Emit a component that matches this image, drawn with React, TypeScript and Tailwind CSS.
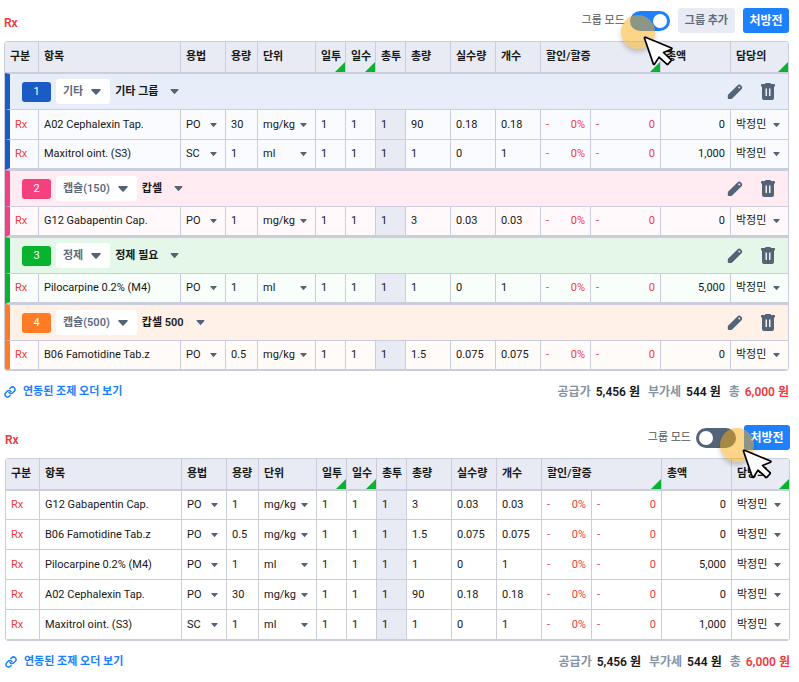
import { useId, useState } from 'react';
import type { ReactNode } from 'react';
import { Link } from 'lucide-react';

type Item = {
  name: string;
  usage: string;
  dose: string;
  unit: string;
  amount: string;
  real: string;
  count: string;
  total: string;
};

type Group = {
  no: number;
  kind: string;
  label: string;
  bar: string;
  badge: string;
  head: string;
  row: string;
  items: Item[];
};

const cephalexin: Item = { name: 'A02 Cephalexin Tap.', usage: 'PO', dose: '30', unit: 'mg/kg', amount: '90', real: '0.18', count: '0.18', total: '0' };
const maxitrol: Item = { name: 'Maxitrol oint. (S3)', usage: 'SC', dose: '1', unit: 'ml', amount: '1', real: '0', count: '1', total: '1,000' };
const gabapentin: Item = { name: 'G12 Gabapentin Cap.', usage: 'PO', dose: '1', unit: 'mg/kg', amount: '3', real: '0.03', count: '0.03', total: '0' };
const pilocarpine: Item = { name: 'Pilocarpine 0.2% (M4)', usage: 'PO', dose: '1', unit: 'ml', amount: '1', real: '0', count: '1', total: '5,000' };
const famotidine: Item = { name: 'B06 Famotidine Tab.z', usage: 'PO', dose: '0.5', unit: 'mg/kg', amount: '1.5', real: '0.075', count: '0.075', total: '0' };

const groups: Group[] = [
  { no: 1, kind: '기타', label: '기타 그룹', bar: 'border-l-[#1a5bc6]', badge: 'bg-[#1a5bc6]', head: 'bg-[#e7edf9]', row: 'bg-[#f9fbff]', items: [cephalexin, maxitrol] },
  { no: 2, kind: '캡슐(150)', label: '캅셀', bar: 'border-l-[#f54080]', badge: 'bg-[#f54080]', head: 'bg-[#ffebf1]', row: 'bg-[#fff9fb]', items: [gabapentin] },
  { no: 3, kind: '정제', label: '정제 필요', bar: 'border-l-[#08b32f]', badge: 'bg-[#08b32f]', head: 'bg-[#e4f7e9]', row: 'bg-[#f8fefa]', items: [pilocarpine] },
  { no: 4, kind: '캡슐(500)', label: '캅셀 500', bar: 'border-l-[#ff7c24]', badge: 'bg-[#ff7c24]', head: 'bg-[#fff1e7]', row: 'bg-[#fffbf8]', items: [famotidine] },
];

const flatItems = [gabapentin, famotidine, pilocarpine, cephalexin, maxitrol];

function Caret({ className = '' }: { className?: string }) {
  return (
    <svg viewBox="0 0 10 6" className={`pointer-events-none fill-[#546478] ${className}`} aria-hidden="true">
      <path d="M1 0h8a.8.8 0 0 1 .6 1.2L5.6 5.6a.8.8 0 0 1-1.2 0L.4 1.2A.8.8 0 0 1 1 0Z" />
    </svg>
  );
}

function CellSelect({ label, value, options }: { label: string; value: string; options: string[] }) {
  return (
    <div className="flex items-center pr-2">
      <select aria-label={label} defaultValue={value} className="-mr-2 min-w-0 flex-1 appearance-none bg-transparent pl-[5px]">
        {options.map((o) => (
          <option key={o}>{o}</option>
        ))}
      </select>
      <Caret className="h-1 w-[7px] shrink-0" />
    </div>
  );
}

function Corner() {
  return (
    <svg viewBox="0 0 10 10" className="absolute right-0 bottom-0 size-[10px] fill-[#08b32f]" aria-hidden="true">
      <path d="M10 0v10H0Z" />
    </svg>
  );
}

const columns: { title: string; span?: number; corner?: boolean }[] = [
  { title: '구분' },
  { title: '항목' },
  { title: '용법' },
  { title: '용량' },
  { title: '단위' },
  { title: '일투', corner: true },
  { title: '일수', corner: true },
  { title: '총투' },
  { title: '총량' },
  { title: '실수량' },
  { title: '개수' },
  { title: '할인/할증', span: 2, corner: true },
  { title: '총액' },
  { title: '담당의', corner: true },
];

const cell = 'border-r border-[#cbcddd] last:border-r-0';

function ItemRow({ item, bar, bg, edge }: { item: Item; bar?: string; bg: string; edge: string }) {
  const td = `${cell} ${edge}`;
  return (
    <tr className={bg}>
      <td className={`${td} pl-[5px] text-[#f03a3e] ${bar ? `border-l-[5px] ${bar}` : ''}`}>Rx</td>
      <td className={`${td} truncate pl-[5px]`}>{item.name}</td>
      <td className={td}>
        <CellSelect label="용법" value={item.usage} options={['PO', 'SC']} />
      </td>
      <td className={`${td} pl-[5px]`}>{item.dose}</td>
      <td className={td}>
        <CellSelect label="단위" value={item.unit} options={['mg/kg', 'ml']} />
      </td>
      <td className={`${td} pl-[5px]`}>1</td>
      <td className={`${td} pl-[5px]`}>1</td>
      <td className={`${td} bg-[#e8ebf3] pl-[5px]`}>1</td>
      <td className={`${td} pl-[5px]`}>{item.amount}</td>
      <td className={`${td} pl-[5px]`}>{item.real}</td>
      <td className={`${td} pl-[5px]`}>{item.count}</td>
      <td className={`${td} text-[#f03a3e]`}>
        <div className="flex justify-between pr-[5px] pl-[5px]">
          <span>-</span>
          <span>0%</span>
        </div>
      </td>
      <td className={`${td} text-[#f03a3e]`}>
        <div className="flex justify-between pr-[5px] pl-[5px]">
          <span>-</span>
          <span>0</span>
        </div>
      </td>
      <td className={`${td} pr-[5px] text-right`}>{item.total}</td>
      <td className={td}>
        <CellSelect label="담당의" value="박정민" options={['박정민']} />
      </td>
    </tr>
  );
}

function PencilIcon() {
  return (
    <svg viewBox="0 0 16 16" className="size-4 fill-[#546478]" aria-hidden="true">
      <path
        fillRule="evenodd"
        d="M.8 14.200v-2.500a1.600 1.600 0 0 1 .5-1.100L10.400 1.500a2.600 2.600 0 0 1 3.700 0l.2.2a2.600 2.600 0 0 1 0 3.700L5.200 14.500a1.600 1.600 0 0 1-1.100.5H1.600a.8.8 0 0 1-.8-.8ZM12.300 2.600a.95.95 0 1 0 0 1.900.95.95 0 0 0 0-1.900Z"
      />
    </svg>
  );
}

function TrashIcon() {
  return (
    <svg viewBox="0 0 14 17" className="h-[17px] w-[14px] fill-[#546478]" aria-hidden="true">
      <path fillRule="evenodd" d="M4 1a1 1 0 0 1 1-1h4a1 1 0 0 1 1 1h3.200a.8.8 0 0 1 .8.800V3.500H13V15a2 2 0 0 1-2 2H3a2 2 0 0 1-2-2V3.500H0V1.800A.8.8 0 0 1 .8 1ZM4.500 5.500v7.500H6v-7.500Zm3.500 0v7.500h1.500v-7.500Z" />
    </svg>
  );
}

function GroupHead({ group }: { group: Group }) {
  return (
    <tr className={group.head}>
      <td colSpan={15} className={`h-[37px] border-y border-l-[5px] border-y-[#cbcddd] ${group.bar}`}>
        <div className="flex items-center pr-[13px] pl-3">
          <span className={`flex h-5 w-[29px] items-center justify-center rounded-[3px] text-white ${group.badge}`}>{group.no}</span>
          <div className="ml-[5px] flex h-[25px] items-center rounded-[3px] bg-white pr-[9px] pl-[7px] font-semibold text-[#5c6b7e]">
            <select aria-label="그룹 종류" defaultValue={group.kind} className="field-sizing-content appearance-none pr-2">
              {['기타', '정제', '캡슐(150)', '캡슐(500)'].map((k) => (
                <option key={k}>{k}</option>
              ))}
            </select>
            <Caret className="h-[6px] w-[10px]" />
          </div>
          <button type="button" className="ml-[5px] flex items-center gap-3 font-semibold">
            {group.label}
            <Caret className="h-[5px] w-[9px]" />
          </button>
          <button type="button" aria-label="그룹 수정" className="ml-auto">
            <PencilIcon />
          </button>
          <button type="button" aria-label="그룹 삭제" className="ml-[18px]">
            <TrashIcon />
          </button>
        </div>
      </td>
    </tr>
  );
}

function OrderTable({ grouped }: { grouped: boolean }) {
  return (
    <div className="overflow-hidden rounded-[3px] border border-[#cbcddd]">
      <table className="w-full min-w-[700px] table-fixed border-separate border-spacing-0 text-left">
        <colgroup>
          <col className="w-[34px]" />
          <col />
          <col className="w-[45px]" />
          <col className="w-8" />
          <col className="w-[58px]" />
          <col className="w-[30px]" />
          <col className="w-[30px]" />
          <col className="w-[30px]" />
          <col className="w-[45px]" />
          <col className="w-[45px]" />
          <col className="w-[45px]" />
          <col className="w-[50px]" />
          <col className="w-[70px]" />
          <col className="w-[70px]" />
          <col className="w-[57px]" />
        </colgroup>
        <thead className="bg-[#e8ebf3]">
          <tr>
            {columns.map((c) => (
              <th key={c.title} colSpan={c.span} className={`relative h-[31px] border-b pl-[5px] font-semibold whitespace-nowrap ${cell}`}>
                {c.title}
                {c.corner && <Corner />}
              </th>
            ))}
          </tr>
        </thead>
        {grouped ? (
          groups.map((g, gi) => (
            <tbody key={g.no}>
              <GroupHead group={g} />
              {g.items.map((item, i) => {
                const final = gi === groups.length - 1;
                const closing = i === g.items.length - 1 && !final;
                return (
                  <ItemRow
                    key={item.name}
                    item={item}
                    bar={g.bar}
                    bg={g.row}
                    edge={closing ? 'h-[30px] border-b-2' : final ? 'h-[29px] border-b' : 'h-[30px] border-b'}
                  />
                );
              })}
            </tbody>
          ))
        ) : (
          <tbody>
            {flatItems.map((item, i) => (
              <ItemRow key={item.name} item={item} bg="bg-white" edge={i === 0 ? 'h-[30px] border-y' : 'h-[30px] border-b'} />
            ))}
          </tbody>
        )}
      </table>
    </div>
  );
}

function Pointer({ place }: { place: string }) {
  return (
    <div className={`pointer-events-none absolute z-10 ${place}`} aria-hidden="true">
      <div className="size-[34px] rounded-full bg-[#faab0f]/50 shadow-[0_3px_5px_rgba(0,0,0,0.2)]" />
      <svg viewBox="0 0 32 32" className="absolute top-[21px] left-[22px] size-8">
        <path
          d="M1.500 2.200C1.300 1.500 1.800 1 2.500 1.300L28.500 12q1 .6 0 1.200l-8 3.300 7.500 7.200q.6.600 0 1.200l-3 3.200q-.6.6-1.200 0l-7.800-7-4.500 7q-.7.800-1.200-.2Z"
          fill="#fff"
          stroke="#000"
          strokeWidth="1.700"
          strokeLinejoin="round"
        />
      </svg>
    </div>
  );
}

function GroupSwitch({ on, onChange, children }: { on: boolean; onChange: (v: boolean) => void; children?: ReactNode }) {
  const id = useId();
  return (
    <div className="flex items-center gap-[5px]">
      <label htmlFor={id} className="text-[#555]">
        그룹 모드
      </label>
      <div className="relative">
        <input
          id={id}
          type="checkbox"
          role="switch"
          checked={on}
          onChange={(e) => onChange(e.target.checked)}
          className="block h-5 w-10 appearance-none rounded-full bg-[#546478] p-[3px] before:block before:size-[14px] before:rounded-full before:bg-white checked:bg-[#1c80ff] checked:before:ml-5"
        />
        {children}
      </div>
    </div>
  );
}

const totals = [
  { label: '공급가', value: '5,456 원', tone: '' },
  { label: '부가세', value: '544 원', tone: '' },
  { label: '총', value: '6,000 원', tone: 'text-[#f03a3e]' },
];

function OrderPanel({ grouped, className, pointer }: { grouped: boolean; className: string; pointer: string }) {
  const [on, setOn] = useState(grouped);
  return (
    <section className={className}>
      <header className="flex h-[25px] items-center">
        <h2 className="self-end text-xs leading-5 font-semibold text-[#f03a3e]">Rx</h2>
        <div className="ml-auto flex items-center gap-2">
          <GroupSwitch on={on} onChange={setOn}>
            <Pointer place={pointer} />
          </GroupSwitch>
          {grouped && (
            <button type="button" className="h-[25px] rounded-[3px] bg-[#e8ebf3] px-[7px] font-semibold text-[#5c6b7e]">
              그룹 추가
            </button>
          )}
          <button type="button" className="h-[25px] w-[46px] rounded-[3px] bg-[#1c80ff] text-xs font-semibold text-white">
            처방전
          </button>
        </div>
      </header>
      <div className="mt-2">
        <OrderTable grouped={on} />
      </div>
      <footer className="mt-[13px] flex items-center justify-between font-semibold">
        <a href="#orders" className="flex items-center gap-[7px] text-[#1c80ff]">
          <Link size={12} strokeWidth={3} aria-hidden="true" />
          연동된 조제 오더 보기
        </a>
        <dl className="flex gap-2 text-xs">
          {totals.map((t) => (
            <div key={t.label} className="flex gap-[5px]">
              <dt className="text-[#8593a3]">{t.label}</dt>
              <dd className={t.tone}>{t.value}</dd>
            </div>
          ))}
        </dl>
      </footer>
    </section>
  );
}

export default function App() {
  return (
    <main className="min-h-screen bg-white pt-2 font-['Roboto','Noto_Sans_CJK_KR',sans-serif] text-[11px] leading-4 text-[#171717]">
      <OrderPanel grouped className="pr-2.5 pl-1" pointer="top-1 left-[-9px]" />
      <OrderPanel grouped={false} className="mt-[25px] pr-[9px] pl-[5px]" pointer="top-0 left-6" />
    </main>
  );
}
